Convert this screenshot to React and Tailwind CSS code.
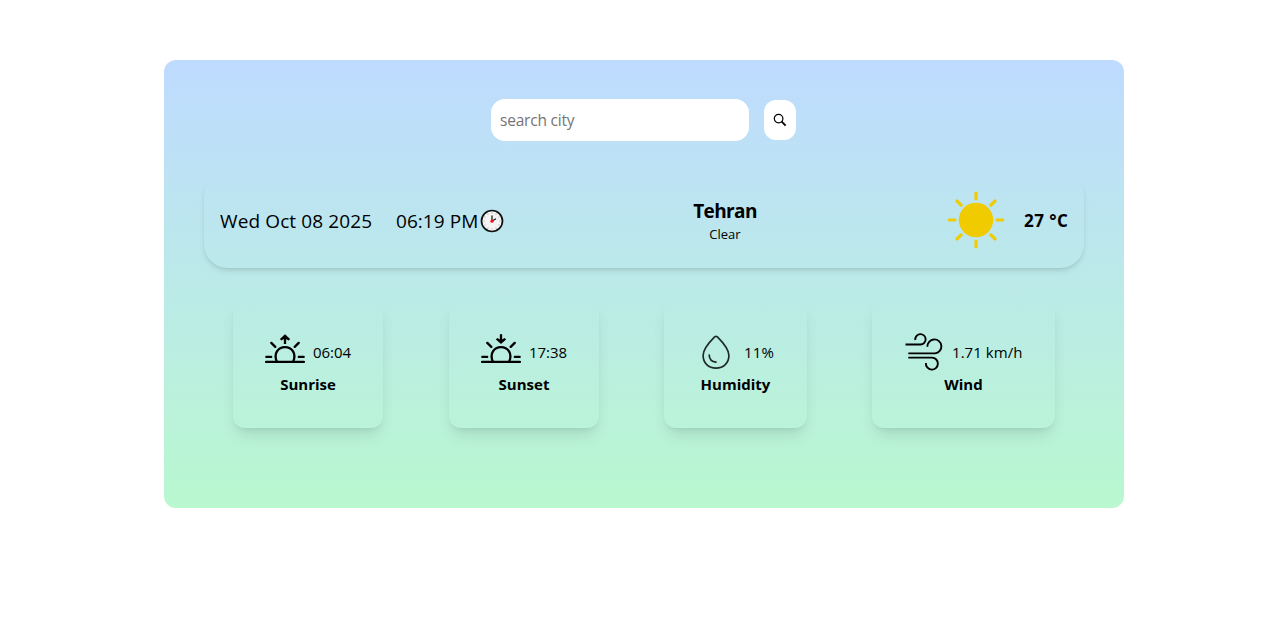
function SearchIcon() {
  return (
    <svg viewBox="0 0 16 16" className="size-4" fill="none" stroke="#000">
      <circle cx="6.6" cy="6.6" r="4.3" strokeWidth="1.2" />
      <path d="M9.7 9.7 13.6 13.6" strokeWidth="1.8" />
    </svg>
  );
}

function ClockIcon() {
  const ticks = [0, 30, 60, 90, 120, 150, 180, 210, 240, 270, 300, 330];
  return (
    <svg viewBox="0 0 24 24" className="size-6 shrink-0">
      <circle cx="12" cy="12" r="10.5" fill="#f5f4f5" stroke="#111" strokeWidth="1.7" />
      {ticks.map((a) => (
        <path key={a} d="M12 3.4V4.6" stroke="#aaa" strokeWidth="0.9" transform={`rotate(${a} 12 12)`} />
      ))}
      <path d="M12 12V6.800M12 12 15.600 10" stroke="#111" strokeWidth="1.200" strokeLinecap="round" />
      <circle cx="12" cy="12.2" r="1.6" fill="#f01224" />
    </svg>
  );
}

function SunIcon() {
  const rays = [0, 45, 90, 135, 180, 225, 270, 315];
  return (
    <svg viewBox="0 0 64 64" className="size-16 shrink-0">
      <circle cx="32" cy="32" r="17.2" fill="#f0cb00" />
      {rays.map((a) => (
        <path key={a} d="M32 5.2V11" stroke="#f0cb00" strokeWidth="3.2" strokeLinecap="round" transform={`rotate(${a} 32 32)`} />
      ))}
    </svg>
  );
}

function HorizonIcon({ down }) {
  return (
    <svg viewBox="0 0 40 40" className="size-10 shrink-0" fill="none" stroke="#000" strokeWidth="2.3">
      <path d="M1 29.900H39M1.300 24.900H6.200M33.800 24.900H38.700" strokeLinecap="round" />
      <path d="M11.800 29.500C8.300 21.500 13 15.200 20 15.200S31.700 21.500 28.200 29.500" />
      <path d="M6.300 10.900 10.300 14.900M33.700 10.900 29.700 14.900" strokeLinecap="round" />
      {down ? (
        <>
          <path d="M20 2.200V9" />
          <path d="M20 12 14.900 7.500 16.300 6 20 8 23.700 6 25.100 7.500Z" fill="#000" stroke="none" />
        </>
      ) : (
        <>
          <path d="M20 12V5" />
          <path d="M20 2.200 14.900 6.900 16.300 8.400 20 6.400 23.700 8.400 25.100 6.900Z" fill="#000" stroke="none" />
        </>
      )}
    </svg>
  );
}

function DropIcon() {
  return (
    <svg viewBox="0 0 40 40" className="size-10 shrink-0" fill="none" stroke="#1c2b28" strokeWidth="1.7" strokeLinecap="round">
      <path d="M18.600 4.900Q20 3.800 21.400 4.900C26 9.500 32.900 17 32.900 23.500C32.900 31 27.500 36.200 20 36.200S7.100 31 7.100 23.500C7.100 17 14 9.500 18.600 4.900Z" />
      <path d="M13.200 23C13.400 27 16 29.900 20 30.200" />
    </svg>
  );
}

function WindIcon() {
  return (
    <svg viewBox="0 0 40 40" className="size-10 shrink-0" fill="none" stroke="#000" strokeWidth="1.9">
      <path d="M1.500 12.500H16.500A5.200 5.200 0 1 0 11.300 8" />
      <path d="M4.300 21.400H31A7 7 0 1 0 23.400 14.800" />
      <path d="M4.300 25.600H28A6 6 0 1 1 21.900 31" />
    </svg>
  );
}

function Card({ icon, value, label, width, valueWidth }) {
  return (
    <div className={`flex h-32 flex-col items-center rounded-xl py-8 shadow-lg ${width}`}>
      <div className="flex h-10 items-center gap-2">
        {icon}
        <span className={`text-[15px] leading-6 whitespace-nowrap ${valueWidth}`}>{value}</span>
      </div>
      <h3 className="text-[15px] leading-6 font-bold">{label}</h3>
    </div>
  );
}

export default function App() {
  return (
    <div className="h-[620px] w-full overflow-hidden bg-white pt-[60px] pl-[164px] font-['Open_Sans','Noto_Sans',sans-serif] text-black">
      <main className="h-[448px] w-[960px] rounded-xl bg-linear-to-b from-blue-200 to-green-200 px-10 pt-[39px]">
        <form className="mr-px flex items-center justify-center gap-[15px]" onSubmit={(e) => e.preventDefault()}>
          <input
            placeholder="search city"
            className="h-[42px] w-[258px] rounded-[14px] bg-white px-[9px] text-[15.500px] tracking-[-0.200px] outline-none placeholder:text-[#757575]"
          />
          <button aria-label="Search" className="flex h-10 w-8 items-center justify-center rounded-xl bg-white">
            <SearchIcon />
          </button>
        </form>
        <section className="mt-[31px] flex h-24 items-center justify-between rounded-3xl px-4 shadow-md">
          <div className="flex w-[286px] items-center pt-[2px] text-[19px] leading-7 whitespace-nowrap">
            <span className="w-[176px] tracking-[0.120px]">Wed Oct 08 2025</span>
            <span className="w-[84px] tracking-[0.050px]">06:19 PM</span>
            <ClockIcon />
          </div>
          <div className="flex flex-col items-center pt-px">
            <h2 className="text-[19px] leading-7 font-bold tracking-[-0.600px]">Tehran</h2>
            <p className="-mt-px text-[13px] leading-5">Clear</p>
          </div>
          <div className="flex items-center gap-4">
            <SunIcon />
            <span className="w-11 pt-px text-[17px] leading-7 font-bold tracking-[0.450px] whitespace-nowrap">27 °C</span>
          </div>
        </section>
        <section className="mt-8 flex px-[29px]">
          <Card icon={<HorizonIcon />} value="06:04" label="Sunrise" width="mr-[66px] w-[150px]" valueWidth="w-[38px] tracking-[-0.050px]" />
          <Card icon={<HorizonIcon down />} value="17:38" label="Sunset" width="mr-[65px] w-[150px]" valueWidth="w-[38px] tracking-[-0.050px]" />
          <Card icon={<DropIcon />} value="11%" label="Humidity" width="mr-[65px] w-[143px]" valueWidth="w-[31px] tracking-[0.200px]" />
          <Card icon={<WindIcon />} value="1.71 km/h" label="Wind" width="w-[183px]" valueWidth="w-[71px] tracking-[0.050px]" />
        </section>
      </main>
    </div>
  );
}
